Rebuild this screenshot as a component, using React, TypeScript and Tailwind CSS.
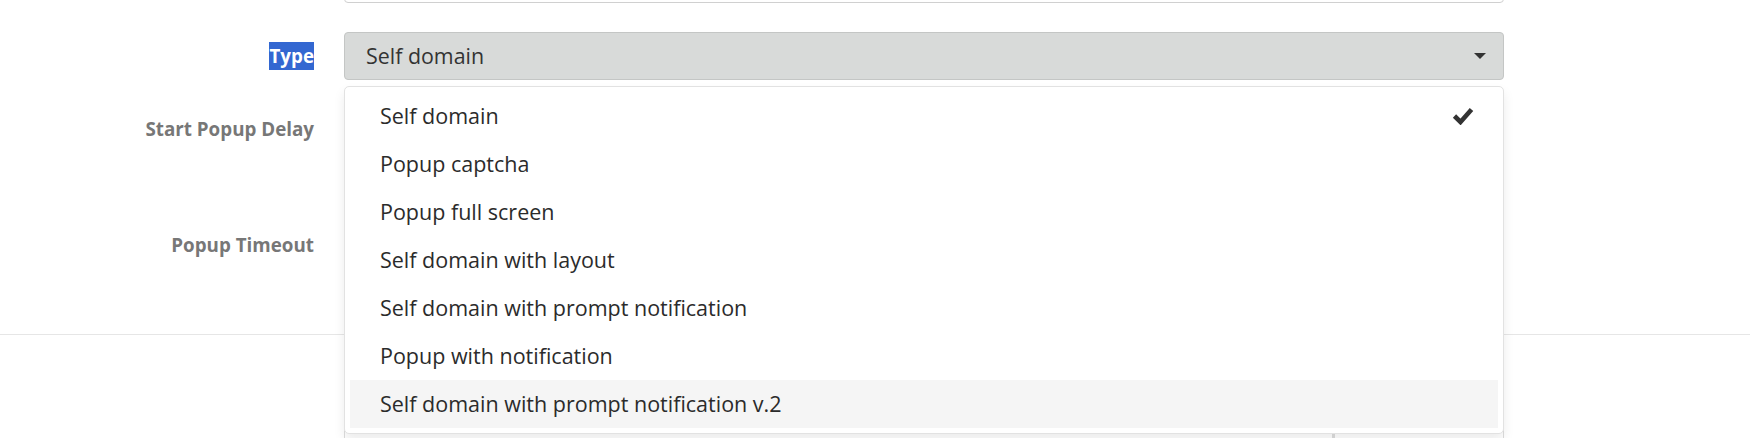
import React from "react";

const options = [
  "Self domain",
  "Popup captcha",
  "Popup full screen",
  "Self domain with layout",
  "Self domain with prompt notification",
  "Popup with notification",
  "Self domain with prompt notification v.2",
];

function Caret() {
  return (
    <svg width="12" height="6" viewBox="0 0 12 6" className="shrink-0">
      <polygon points="0,0 12,0 6,6" fill="#333" />
    </svg>
  );
}

function Check() {
  return (
    <svg width="22" height="18" viewBox="0 0 22 18" className="shrink-0">
      <polyline
        points="2.5,9 8.5,15 19.5,2.5"
        fill="none"
        stroke="#333"
        strokeWidth="4.6"
        strokeLinejoin="miter"
      />
    </svg>
  );
}

export default function App() {
  return (
    <div className="h-[438px] w-[1750px] overflow-hidden bg-white font-['Open_Sans',sans-serif] text-[#333]">
      <div className="-mt-[45px] flex flex-col">
        {/* previous field */}
        <div className="grid grid-cols-[314px_1160px] gap-x-[30px]">
          <div />
          <div className="h-[48px] rounded-[4px] border border-[#d0d0d0] bg-white" />
        </div>

        {/* Type */}
        <div className="mt-[29px] grid grid-cols-[314px_1160px] items-center gap-x-[30px]">
          <div className="flex justify-end">
            <span className="bg-[#3367d1] text-[18.8px] font-bold leading-[28px] text-white">Type</span>
          </div>
          <div className="relative">
            <div className="flex h-[48px] w-full items-center justify-between rounded-[4px] border border-[#c4c6c5] bg-[#d8dad9] pl-[21px] pr-[17px] text-[21.4px]">
              <span>Self domain</span>
              <Caret />
            </div>
            <div className="absolute left-0 top-[54px] z-10 w-full rounded-[5px] border border-[#e2e2e2] bg-white p-[5px] shadow-[0_6px_12px_rgba(0,0,0,0.08)]">
              {options.map((o, i) => (
                <div
                  key={o}
                  className={
                    "flex h-[48px] items-center justify-between pl-[30px] pr-[24px] text-[21.5px] text-[#2b2b2b] " +
                    (i === options.length - 1 ? "bg-[#f5f5f5]" : "")
                  }
                >
                  <span>{o}</span>
                  {i === 0 && <Check />}
                </div>
              ))}
            </div>
          </div>
        </div>

        {/* Start Popup Delay */}
        <div className="mt-[28px] grid grid-cols-[314px_1160px] items-center gap-x-[30px]">
          <div className="-mt-[6px] text-right text-[18.8px] font-bold leading-[28px] text-[#777]">Start Popup Delay</div>
          <div className="h-[48px] rounded-[4px] border border-[#ccc] bg-white" />
        </div>

        {/* Popup Timeout */}
        <div className="mt-[67px] grid grid-cols-[314px_1160px] items-center gap-x-[30px]">
          <div className="-mt-[5px] text-right text-[18.8px] font-bold leading-[28px] text-[#777]">Popup Timeout</div>
          <div className="h-[48px] rounded-[4px] border border-[#ccc] bg-white" />
        </div>

        <div className="mt-[63px] h-px w-full bg-[#e6e6e6]" />

        {/* next group */}
        <div className="mt-[64px] grid grid-cols-[314px_1160px] gap-x-[30px]">
          <div />
          <div className="flex h-[48px]">
            <div className="flex-1 rounded-l-[4px] border border-[#ddd] bg-white" />
            <div className="w-[171px] rounded-r-[4px] border border-l-2 border-[#ddd] bg-white" />
          </div>
        </div>
      </div>
    </div>
  );
}
